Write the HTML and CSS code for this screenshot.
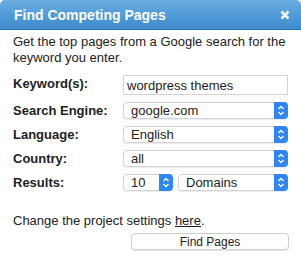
FILE: index.html
```html
<!DOCTYPE html>
<html lang="en">
<head>
  <meta charset="UTF-8">
  <title>Find Competing Pages</title>
  <link rel="stylesheet" href="styles.css">
</head>
<body>
  <div class="dialog">
    <div class="title-bar">
      <span class="title">Find Competing Pages</span>
      <svg class="close" width="10" height="10" viewBox="0 0 10 10">
        <path d="M1.5 1.5 L8.5 8.5 M8.5 1.5 L1.5 8.5" stroke="#eef5fc" stroke-width="2.6" stroke-linecap="butt"/>
      </svg>
    </div>
    <div class="content">
      <p class="intro">Get the top pages from a Google search for the keyword you enter.</p>

      <div class="form">
        <label>Keyword(s):</label>
        <input type="text" class="field" value="wordpress themes">

        <label>Search Engine:</label>
        <div class="select"><span>google.com</span><i class="arrows"></i></div>

        <label>Language:</label>
        <div class="select"><span>English</span><i class="arrows"></i></div>

        <label>Country:</label>
        <div class="select"><span>all</span><i class="arrows"></i></div>

        <label>Results:</label>
        <div class="pair">
          <div class="select small"><span>10</span><i class="arrows"></i></div>
          <div class="select"><span>Domains</span><i class="arrows"></i></div>
        </div>
      </div>

      <p class="settings">Change the project settings <a href="#">here</a>.</p>

      <div class="actions">
        <button>Find Pages</button>
      </div>
    </div>
  </div>
</body>
</html>
```

FILE: styles.css
```css
body {
  margin: 0;
  font-family: "Liberation Sans", Arial, sans-serif;
  background: #fff;
  color: #222;
}

.dialog {
  width: 301px;
  height: 258px;
  background: #fff;
}

.title-bar {
  height: 29px;
  display: flex;
  align-items: center;
  justify-content: space-between;
  padding: 0 11px 0 14px;
  border-radius: 5px 5px 0 0;
  background: linear-gradient(#6aaee0, #4d98d6 60%, #3f8acb);
  border-bottom: 1px solid #2f74b3;
}

.title {
  color: #fff;
  font-weight: bold;
  font-size: 14px;
}

.intro {
  margin: 4px 0 9px;
  font-size: 13px;
  line-height: 16px;
}

.content {
  padding: 0 13px;
}

.form {
  display: grid;
  grid-template-columns: 110px 165px;
  row-gap: 7px;
  align-items: center;
}

.form label {
  font-weight: bold;
  font-size: 13px;
  align-self: start;
  padding-top: 1px;
}

.field {
  height: 20px;
  box-sizing: border-box;
  border: 1px solid #d4d4d4;
  padding: 0 3px;
  font-family: inherit;
  font-size: 13px;
  color: #222;
}

.select {
  height: 17px;
  box-sizing: border-box;
  display: flex;
  align-items: center;
  justify-content: space-between;
  border: 1px solid #d2d2d2;
  border-radius: 4px;
  padding-left: 7px;
  font-size: 13px;
  background: #fff;
  box-shadow: 0 1px 1px rgba(0, 0, 0, 0.08);
}

.arrows {
  width: 14px;
  height: 17px;
  margin-right: -1px;
  border-radius: 0 4px 4px 0;
  background: #2d86f2 url("data:image/svg+xml;utf8,<svg xmlns='http://www.w3.org/2000/svg' width='14' height='17'><path d='M4.5 7 L7 4.5 L9.5 7 M4.5 10 L7 12.5 L9.5 10' fill='none' stroke='white' stroke-width='1.3'/></svg>") no-repeat center;
}

.pair {
  display: flex;
  gap: 5px;
}

.pair .select {
  flex: 1;
}

.pair .select.small {
  flex: 0 0 50px;
}

.settings {
  margin: 22px 0 5px;
  font-size: 13px;
}

.settings a {
  color: #222;
}

.actions {
  display: flex;
  justify-content: flex-end;
}

button {
  width: 158px;
  height: 17px;
  border: 1px solid #cfcfcf;
  border-radius: 4px;
  background: #fff;
  font-family: inherit;
  font-size: 12px;
  color: #222;
  box-shadow: 0 1px 1px rgba(0, 0, 0, 0.1);
  margin-right: -1px;
}
```
